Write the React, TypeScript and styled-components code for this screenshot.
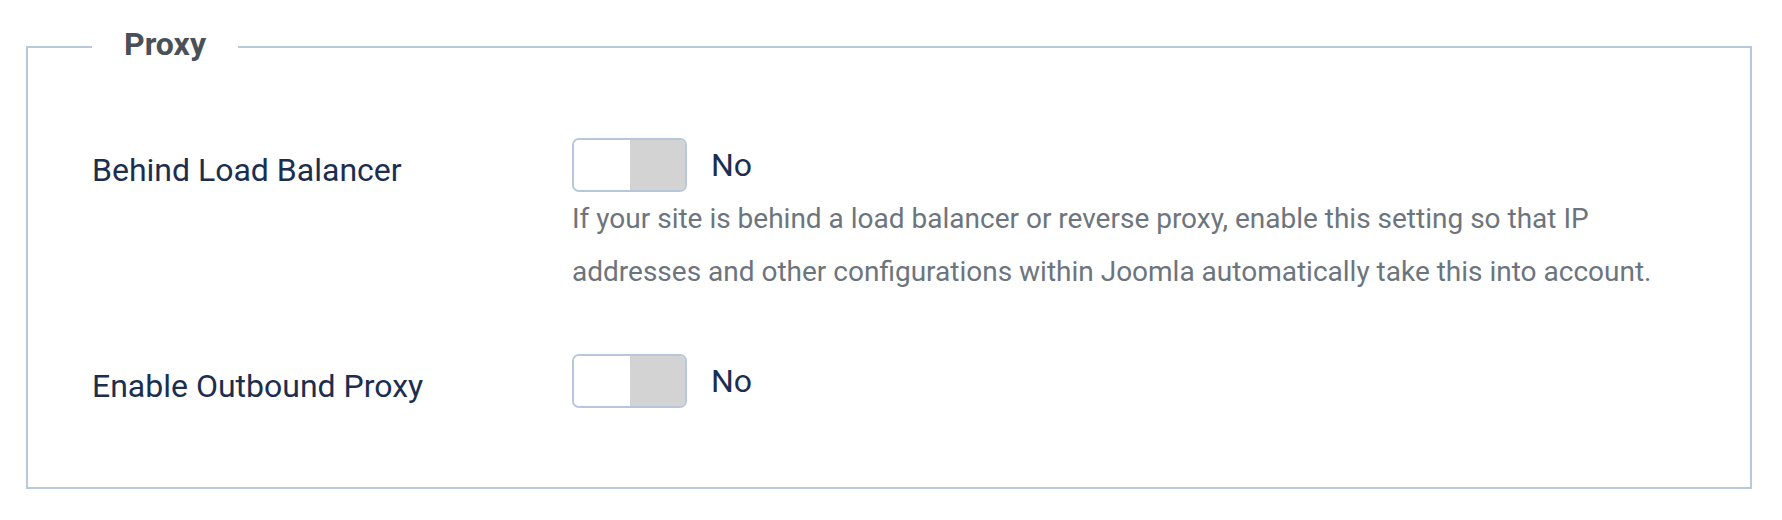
import { createGlobalStyle, styled } from "styled-components";

const GlobalStyle = createGlobalStyle`
  body {
    margin: 0;
    background: #fff;
    font-family: Roboto, "Liberation Sans", sans-serif;
  }
`;

const Fieldset = styled.fieldset`
  margin: 24px 30px 0 26px;
  padding: 68px 64px 77px;
  border: 2px solid #bac8dc;
  min-width: 0;
`;

const Legend = styled.legend`
  padding: 0 32px 6px;
  font-size: 32px;
  line-height: 40px;
  font-weight: 700;
  color: #495057;
`;

const Groups = styled.div`
  display: flex;
  flex-direction: column;
  gap: 56px;
`;

const Group = styled.div`
  display: grid;
  grid-template-columns: 480px 1fr;
`;

const Label = styled.label`
  padding-top: 8px;
  font-size: 32px;
  line-height: 48px;
  color: #1b2e4f;
`;

const Controls = styled.div`
  display: flex;
  flex-direction: column;
`;

const SwitchRow = styled.div`
  display: flex;
  align-items: center;
`;

const Toggle = styled.button`
  display: flex;
  width: 115px;
  height: 54px;
  padding: 0;
  box-sizing: border-box;
  border: 2px solid #b8c6db;
  border-radius: 7px;
  overflow: hidden;
  background: #fff;
  cursor: pointer;
`;

const Half = styled.span<{ $off?: boolean }>`
  flex: 1;
  background: ${(p) => (p.$off ? "#d3d3d3" : "#fff")};
`;

const State = styled.span`
  margin-left: 24px;
  font-size: 32px;
  color: #1b2e4f;
`;

const Description = styled.div`
  font-size: 28px;
  line-height: 53px;
  color: #6c757d;
`;

type Setting = {
  id: string;
  label: string;
  description?: string;
};

const settings: Setting[] = [
  {
    id: "behind_loadbalancer",
    label: "Behind Load Balancer",
    description:
      "If your site is behind a load balancer or reverse proxy, enable this setting so that IP addresses and other configurations within Joomla automatically take this into account.",
  },
  { id: "proxy_enable", label: "Enable Outbound Proxy" },
];

export default function App() {
  return (
    <>
      <GlobalStyle />
      <Fieldset>
        <Legend>Proxy</Legend>
        <Groups>
          {settings.map((s) => (
            <Group key={s.id}>
              <Label htmlFor={s.id}>{s.label}</Label>
              <Controls>
                <SwitchRow>
                  <Toggle id={s.id} type="button" aria-pressed={false}>
                    <Half />
                    <Half $off />
                  </Toggle>
                  <State>No</State>
                </SwitchRow>
                {s.description && <Description>{s.description}</Description>}
              </Controls>
            </Group>
          ))}
        </Groups>
      </Fieldset>
    </>
  );
}
